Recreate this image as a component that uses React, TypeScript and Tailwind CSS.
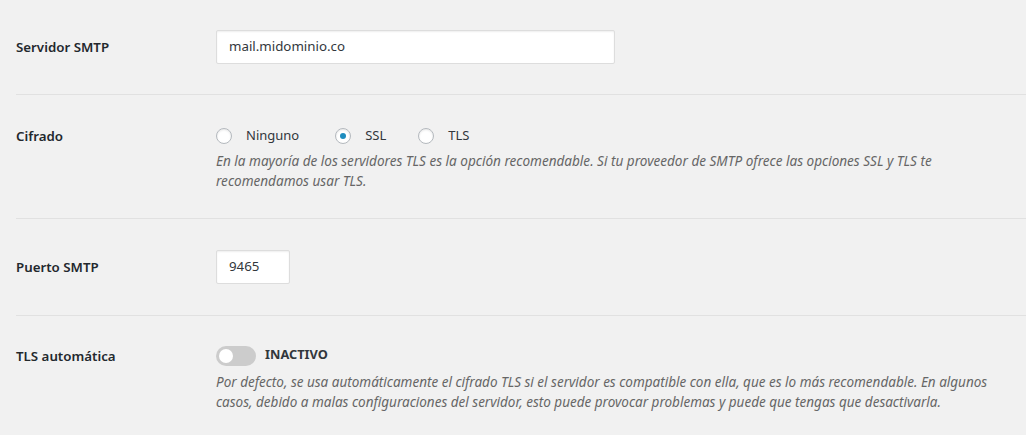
import React from "react";

const font = { fontFamily: '"Noto Sans", "Open Sans", sans-serif' };

function Radio({ checked, label, className = "" }: { checked?: boolean; label: string; className?: string }) {
  return (
    <label className={`flex items-center h-[20px] ${className}`}>
      <span className="w-[16px] h-[16px] rounded-full border border-[#b4b9be] bg-white shadow-[inset_0_1px_2px_rgba(0,0,0,0.1)] flex items-center justify-center">
        {checked && <span className="w-[6px] h-[6px] rounded-full bg-[#1e8cbe]" />}
      </span>
      <span className="ml-[14px] text-[13px] text-[#32373c]">{label}</span>
    </label>
  );
}

export default function App() {
  return (
    <div className="w-[1026px] h-[435px] bg-[#f1f1f1] overflow-hidden pl-4" style={font}>
      {/* Row 1 */}
      <div className="flex border-b border-[#e1e1e1] pt-[30px] pb-[30px]">
        <div className="w-[200px] shrink-0 mt-[7px] leading-[20px] text-[13.3px] font-semibold text-[#23282d]">Servidor SMTP</div>
        <div className="w-[399px] h-[34px] bg-white border border-[#ddd] shadow-[inset_0_1px_2px_rgba(0,0,0,0.07)] rounded-[2px] flex items-center px-[12px] text-[13.3px] text-[#32373c]">
          mail.midominio.co
        </div>
      </div>
      {/* Row 2 */}
      <div className="flex border-b border-[#e1e1e1] pt-[31px] pb-[27px]">
        <div className="w-[200px] shrink-0 leading-[20px] text-[13.3px] font-semibold text-[#23282d]">Cifrado</div>
        <div className="flex flex-col">
          <div className="flex items-center">
            <Radio label="Ninguno" />
            <Radio checked label="SSL" className="ml-[36px]" />
            <Radio label="TLS" className="ml-[32px]" />
          </div>
          <p className="mt-[5px] text-[13.55px] leading-[20px] italic text-[#666]">
            En la mayoría de los servidores TLS es la opción recomendable. Si tu proveedor de SMTP ofrece las opciones SSL y TLS te
            <br />
            recomendamos usar TLS.
          </p>
        </div>
      </div>
      {/* Row 3 */}
      <div className="flex border-b border-[#e1e1e1] pt-[31px] pb-[31px]">
        <div className="w-[200px] shrink-0 mt-[7px] leading-[20px] text-[13.3px] font-semibold text-[#23282d]">Puerto SMTP</div>
        <div className="w-[74px] h-[34px] bg-white border border-[#ddd] shadow-[inset_0_1px_2px_rgba(0,0,0,0.07)] rounded-[2px] flex items-center px-[12px] text-[13.3px] text-[#32373c]">
          9465
        </div>
      </div>
      {/* Row 4 */}
      <div className="flex pt-[30px]">
        <div className="w-[200px] shrink-0 mt-0 leading-[20px] text-[13.3px] font-semibold text-[#23282d]">TLS automática</div>
        <div className="flex flex-col">
          <div className="flex items-center h-[20px]">
            <span className="w-[40px] h-[20px] rounded-full bg-[#cccccc] flex items-center px-[3px]">
              <span className="w-[14px] h-[14px] rounded-full bg-white" />
            </span>
            <span className="ml-[9px] -mt-[2px] text-[12.8px] font-bold text-[#32373c]">INACTIVO</span>
          </div>
          <p className="mt-[6px] text-[13.5px] leading-[20px] italic text-[#666]">
            Por defecto, se usa automáticamente el cifrado TLS si el servidor es compatible con ella, que es lo más recomendable. En algunos
            <br />
            casos, debido a malas configuraciones del servidor, esto puede provocar problemas y puede que tengas que desactivarla.
          </p>
        </div>
      </div>
    </div>
  );
}
